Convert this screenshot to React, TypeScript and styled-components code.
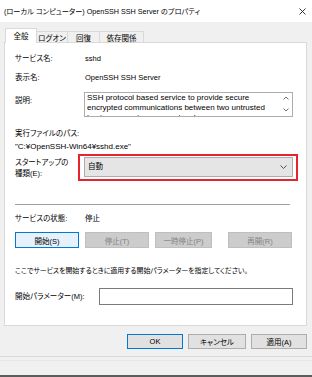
import styled, { createGlobalStyle } from 'styled-components';

const GlobalStyle = createGlobalStyle`
  html, body {
    margin: 0;
    padding: 0;
    background: #f0f0f0;
  }
  body {
    font-family: 'Liberation Sans', 'Noto Sans CJK JP', sans-serif;
    font-size: 7.5px;
    color: #000;
    font-feature-settings: 'palt' 1;
  }
`;

const Window = styled.div`
  width: 312px;
  height: 377px;
  display: flex;
  flex-direction: column;
  background: #f0f0f0;
  overflow: hidden;
`;

const TitleBar = styled.div`
  height: 22px;
  flex: none;
  background: #fff;
  display: flex;
  align-items: center;
  justify-content: space-between;
  padding: 0 6px 0 4px;
  font-size: 7.2px;
`;

const CloseIcon = () => (
  <svg width="7" height="7" viewBox="0 0 7 7">
    <path d="M0.5 0.5 L6.5 6.5 M6.5 0.5 L0.5 6.5" stroke="#222" strokeWidth="0.9" />
  </svg>
);

const Body = styled.div`
  flex: 1;
  display: flex;
  flex-direction: column;
  padding: 6px 5px 0 4px;
`;

const TabRow = styled.div`
  height: 15px;
  display: flex;
  align-items: flex-end;
  padding-left: 1px;
  margin-bottom: -1px;
  position: relative;
  z-index: 1;
`;

const Tab = styled.div<{ $active?: boolean; $w: number }>`
  width: ${(p) => p.$w}px;
  height: ${(p) => (p.$active ? 15 : 12)}px;
  box-sizing: border-box;
  border: 1px solid #d9d9d9;
  border-bottom: ${(p) => (p.$active ? 'none' : '1px solid #d9d9d9')};
  border-left: ${(p) => (p.$active ? '1px solid #d9d9d9' : 'none')};
  background: ${(p) => (p.$active ? '#fff' : '#f0f0f0')};
  display: flex;
  align-items: center;
  justify-content: center;
  padding-bottom: ${(p) => (p.$active ? 1 : 0)}px;
`;

const Panel = styled.div`
  height: 284px;
  box-sizing: border-box;
  background: #fff;
  border: 1px solid #d9d9d9;
  padding: 10px 13px 0 10px;
  display: flex;
  flex-direction: column;
`;

const Row = styled.div<{ $mt: number; $h?: number; $label?: number }>`
  display: flex;
  align-items: flex-start;
  margin-top: ${(p) => p.$mt}px;
  min-height: ${(p) => p.$h ?? 12}px;
  line-height: 12px;

  & > span:first-child {
    width: ${(p) => p.$label ?? 69}px;
    flex: none;
  }
`;

const Line = styled.div<{ $mt: number; $size?: number }>`
  margin-top: ${(p) => p.$mt}px;
  line-height: 12px;
  white-space: nowrap;
  font-size: ${(p) => p.$size ?? 7.5}px;
`;

const Value = styled.span`
  padding-left: 1px;
`;

const TextArea = styled.div`
  flex: 1;
  height: 25px;
  box-sizing: border-box;
  border: 1px solid #abadb3;
  display: flex;
  overflow: hidden;
`;

const TextContent = styled.div`
  flex: 1;
  padding: 0 2px;
  font-size: 8px;
  line-height: 10px;
  white-space: nowrap;
  overflow: hidden;
`;

const ScrollCol = styled.div`
  width: 12px;
  display: flex;
  flex-direction: column;
  align-items: center;
  justify-content: space-between;
  padding: 3px 0 4px;
`;

const Highlight = styled.div`
  flex: 1;
  border: 2px solid #e8232b;
  padding: 1px 3px 2px 4px;
  margin-right: -5px;
`;

const Combo = styled.div`
  height: 20px;
  box-sizing: border-box;
  background: #e5e5e5;
  border: 1px solid #adadad;
  display: flex;
  align-items: center;
  justify-content: space-between;
  padding: 0 5px 0 3px;
`;

const Separator = styled.div<{ $mt: number }>`
  height: 1px;
  background: #a0a0a0;
  margin-top: ${(p) => p.$mt}px;
  margin-right: 3px;
`;

const ButtonRow = styled.div<{ $mt: number }>`
  display: flex;
  margin-top: ${(p) => p.$mt}px;
`;

const Button = styled.div<{ $w: number; $gap?: number; $variant?: 'focus' | 'disabled' | 'default' | 'normal' }>`
  width: ${(p) => p.$w}px;
  height: 16px;
  box-sizing: border-box;
  margin-left: ${(p) => p.$gap ?? 0}px;
  display: flex;
  align-items: center;
  justify-content: center;
  border: 1px solid
    ${(p) =>
      p.$variant === 'focus' || p.$variant === 'default'
        ? '#0078d7'
        : p.$variant === 'disabled'
          ? '#bfbfbf'
          : '#adadad'};
  background: ${(p) =>
    p.$variant === 'focus' ? '#e5f1fb' : p.$variant === 'disabled' ? '#cccccc' : '#e1e1e1'};
  color: ${(p) => (p.$variant === 'disabled' ? '#838383' : '#000')};
`;

const DialogButton = styled(Button)`
  height: 15px;
`;

const Info = styled.div`
  margin-top: 17px;
  line-height: 12px;
  font-size: 6.9px;
`;

const Input = styled.div`
  flex: 1;
  height: 17px;
  box-sizing: border-box;
  border: 1px solid #7a7a7a;
  margin-top: -3px;
`;

const DialogButtons = styled.div`
  display: flex;
  justify-content: flex-end;
  gap: 5px;
  margin-top: 8px;
  height: 15px;
`;

const Footer = styled.div`
  margin-top: 7px;
  height: 3px;
  border-top: 1px solid #dadada;
  border-bottom: 1px solid #e6e6e6;
  margin-left: -4px;
  margin-right: -5px;
`;

const BottomEdge = styled.div`
  margin-top: auto;
  margin-left: -4px;
  margin-right: -5px;
  height: 2px;
  background: #5c5c5c;
`;

const Chevron = ({ up }: { up?: boolean }) => (
  <svg width="6" height="4" viewBox="0 0 6 4">
    <path d={up ? 'M0.5 3.5 L3 1 L5.5 3.5' : 'M0.5 0.5 L3 3 L5.5 0.5'} fill="none" stroke="#606060" strokeWidth="0.9" />
  </svg>
);

const ComboArrow = () => (
  <svg width="7" height="4" viewBox="0 0 7 4">
    <path d="M0.5 0.5 L3.5 3.5 L6.5 0.5" fill="none" stroke="#404040" strokeWidth="0.9" />
  </svg>
);

const tabs = [
  { name: '全般', w: 32, active: true },
  { name: 'ログオン', w: 31 },
  { name: '回復', w: 32 },
  { name: '依存関係', w: 44 },
];

const App: React.FC = () => {
  return (
    <>
      <GlobalStyle />
      <Window>
        <TitleBar>
          <span>(ローカル コンピューター) OpenSSH SSH Server のプロパティ</span>
          <CloseIcon />
        </TitleBar>
        <Body>
          <TabRow>
            {tabs.map((t) => (
              <Tab key={t.name} $w={t.w} $active={t.active}>
                {t.name}
              </Tab>
            ))}
          </TabRow>
          <Panel>
            <Row $mt={0}>
              <span>サービス名:</span>
              <Value>sshd</Value>
            </Row>
            <Row $mt={7}>
              <span>表示名:</span>
              <Value>OpenSSH SSH Server</Value>
            </Row>
            <Row $mt={8} $h={25}>
              <span style={{ paddingTop: 3 }}>説明:</span>
              <TextArea>
                <TextContent>
                  SSH protocol based service to provide secure
                  <br />
                  encrypted communications between two untrusted
                  <br />
                  hosts over an insecure network
                </TextContent>
                <ScrollCol>
                  <Chevron up />
                  <Chevron />
                </ScrollCol>
              </TextArea>
            </Row>
            <Line $mt={11}>実行ファイルのパス:</Line>
            <Line $mt={1} $size={8}>"C:¥OpenSSH-Win64¥sshd.exe"</Line>
            <Row $mt={1} $label={63}>
              <span style={{ lineHeight: '11px', paddingTop: 3 }}>
                スタートアップの
                <br />
                種類(E):
              </span>
              <Highlight>
                <Combo>
                  <span>自動</span>
                  <ComboArrow />
                </Combo>
              </Highlight>
            </Row>
            <Separator $mt={23} />
            <Row $mt={8}>
              <span>サービスの状態:</span>
              <Value>停止</Value>
            </Row>
            <ButtonRow $mt={7}>
              <Button $w={64} $variant="focus">開始(S)</Button>
              <Button $w={64} $gap={6} $variant="disabled">停止(T)</Button>
              <Button $w={57} $gap={6} $variant="disabled">一時停止(P)</Button>
              <Button $w={64} $gap={16} $variant="disabled">再開(R)</Button>
            </ButtonRow>
            <Info>ここでサービスを開始するときに適用する開始パラメーターを指定してください。</Info>
            <Row $mt={14} $label={84}>
              <span>開始パラメーター(M):</span>
              <Input />
            </Row>
          </Panel>
          <DialogButtons>
            <DialogButton $w={56} $variant="default">OK</DialogButton>
            <DialogButton $w={58} $variant="normal">キャンセル</DialogButton>
            <DialogButton $w={56} $variant="normal">適用(A)</DialogButton>
          </DialogButtons>
          <Footer />
          <BottomEdge />
        </Body>
      </Window>
    </>
  );
};

export default App;
